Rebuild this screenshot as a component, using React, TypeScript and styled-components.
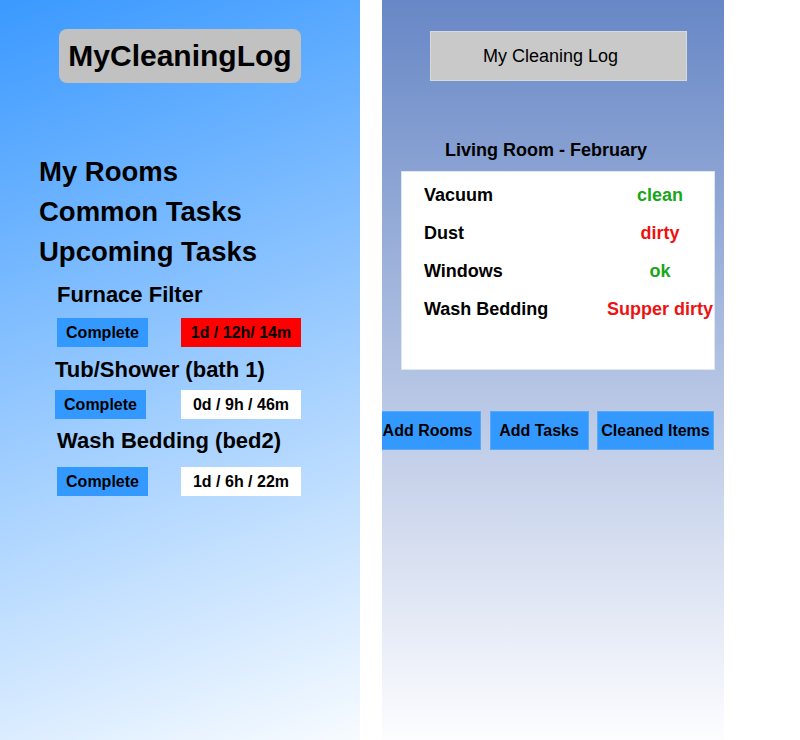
import React from "react";
import styled, { createGlobalStyle } from "styled-components";

const Global = createGlobalStyle`
  html, body { margin: 0; padding: 0; background: #ffffff; }
  body { font-family: "Liberation Sans", Arial, Helvetica, sans-serif; color: #000; }
  * { box-sizing: border-box; }
`;

const Page = styled.div`
  display: flex;
  width: 800px;
  height: 740px;
  overflow: hidden;
`;

const LeftPanel = styled.section`
  width: 360px;
  height: 740px;
  display: flex;
  flex-direction: column;
  background: linear-gradient(160deg, #3a99ff 0%, #f7fbff 100%);
`;

const Brand = styled.div`
  align-self: center;
  margin-top: 29px;
  height: 54px;
  padding: 0 9px;
  border-radius: 8px;
  background: #c1c1c1;
  font-size: 30px;
  font-weight: 700;
  line-height: 54px;
  white-space: nowrap;
`;

const Nav = styled.nav`
  margin-top: 68.5px;
  padding-left: 39px;
  display: flex;
  flex-direction: column;
`;

const NavItem = styled.div`
  font-size: 27.5px;
  font-weight: 700;
  line-height: 40px;
  white-space: nowrap;
`;

const Tasks = styled.div`
  margin-top: 10px;
  padding-left: 55px;
  display: flex;
  flex-direction: column;
`;

const Task = styled.div<{ $top: number }>`
  margin-top: ${(p) => p.$top}px;
  display: flex;
  flex-direction: column;
`;

const TaskTitle = styled.div<{ $indent: number; $gap: number }>`
  margin-left: ${(p) => p.$indent}px;
  margin-bottom: ${(p) => p.$gap}px;
  font-size: 22px;
  font-weight: 700;
  line-height: 26px;
  white-space: nowrap;
`;

const TaskRow = styled.div`
  display: grid;
  grid-template-columns: 126px 120px;
  height: 29px;
`;

const CompleteButton = styled.button<{ $indent: number }>`
  margin-left: ${(p) => p.$indent}px;
  width: 91px;
  height: 29px;
  border: none;
  padding: 0;
  background: #3399ff;
  font-family: inherit;
  font-size: 16px;
  font-weight: 700;
  color: #000;
  cursor: pointer;
`;

const Timer = styled.div<{ $overdue: boolean }>`
  width: 120px;
  height: 29px;
  display: flex;
  align-items: center;
  justify-content: center;
  background: ${(p) => (p.$overdue ? "#ff0000" : "#ffffff")};
  font-size: 16px;
  font-weight: 700;
  white-space: nowrap;
`;

const RightPanel = styled.section`
  margin-left: 22px;
  width: 342px;
  height: 740px;
  display: flex;
  flex-direction: column;
  overflow: hidden;
  background: linear-gradient(to bottom, #6787c6 0%, #fdfdff 100%);
`;

const Header = styled.div`
  margin: 31px 0 0 48px;
  width: 257px;
  height: 50px;
  display: flex;
  align-items: center;
  justify-content: center;
  padding-right: 16px;
  background: #c9c9c9;
  border: 1px solid #d9d9d9;
  font-size: 18px;
  white-space: nowrap;
`;

const RoomTitle = styled.h2`
  margin: 57.5px 0 0 63px;
  font-size: 18px;
  font-weight: 700;
  line-height: 22px;
  white-space: nowrap;
`;

const Card = styled.div`
  margin: 10.5px 0 0 19px;
  width: 314px;
  height: 199px;
  padding: 11.5px 0 0 22px;
  background: #ffffff;
  border: 1px solid #dfe6f3;
  display: grid;
  grid-template-columns: 1fr 108px;
  grid-auto-rows: 22px;
  row-gap: 16px;
  align-content: start;
`;

const ItemName = styled.div`
  font-size: 18px;
  font-weight: 700;
  line-height: 22px;
  white-space: nowrap;
`;

const ItemState = styled.div<{ $tone: "good" | "bad" }>`
  font-size: 18px;
  font-weight: 700;
  line-height: 22px;
  text-align: center;
  white-space: nowrap;
  color: ${(p) => (p.$tone === "good" ? "#19a619" : "#ee1212")};
`;

const Actions = styled.div`
  margin: 41px 0 0 -8px;
  display: flex;
  gap: 8.5px;
`;

const ActionButton = styled.button<{ $w: number }>`
  flex: none;
  width: ${(p) => p.$w}px;
  height: 39px;
  padding: 0;
  border: 1px solid #5aa9f5;
  background: #3399ff;
  font-family: inherit;
  font-size: 16px;
  font-weight: 700;
  color: #000;
  white-space: nowrap;
  cursor: pointer;
`;

const tasks = [
  { name: "Furnace Filter", time: "1d / 12h/ 14m", overdue: true, indent: 2, top: 0, gap: 10.6 },
  { name: "Tub/Shower (bath 1)", time: "0d / 9h / 46m", overdue: false, indent: 0, top: 10.4, gap: 6.6 },
  { name: "Wash Bedding (bed2)", time: "1d / 6h / 22m", overdue: false, indent: 2, top: 9.4, gap: 12.6 },
];

const items: { name: string; state: string; tone: "good" | "bad" }[] = [
  { name: "Vacuum", state: "clean", tone: "good" },
  { name: "Dust", state: "dirty", tone: "bad" },
  { name: "Windows", state: "ok", tone: "good" },
  { name: "Wash Bedding", state: "Supper dirty", tone: "bad" },
];

export default function App() {
  return (
    <>
      <Global />
      <Page>
        <LeftPanel>
          <Brand>MyCleaningLog</Brand>
          <Nav>
            <NavItem>My Rooms</NavItem>
            <NavItem>Common Tasks</NavItem>
            <NavItem>Upcoming Tasks</NavItem>
          </Nav>
          <Tasks>
            {tasks.map((t) => (
              <Task key={t.name} $top={t.top}>
                <TaskTitle $indent={t.indent} $gap={t.gap}>
                  {t.name}
                </TaskTitle>
                <TaskRow>
                  <CompleteButton $indent={t.indent}>Complete</CompleteButton>
                  <Timer $overdue={t.overdue}>{t.time}</Timer>
                </TaskRow>
              </Task>
            ))}
          </Tasks>
        </LeftPanel>
        <RightPanel>
          <Header>My Cleaning Log</Header>
          <RoomTitle>Living Room - February</RoomTitle>
          <Card>
            {items.map((i) => (
              <React.Fragment key={i.name}>
                <ItemName>{i.name}</ItemName>
                <ItemState $tone={i.tone}>{i.state}</ItemState>
              </React.Fragment>
            ))}
          </Card>
          <Actions>
            <ActionButton $w={107}>Add Rooms</ActionButton>
            <ActionButton $w={99}>Add Tasks</ActionButton>
            <ActionButton $w={117}>Cleaned Items</ActionButton>
          </Actions>
        </RightPanel>
      </Page>
    </>
  );
}
